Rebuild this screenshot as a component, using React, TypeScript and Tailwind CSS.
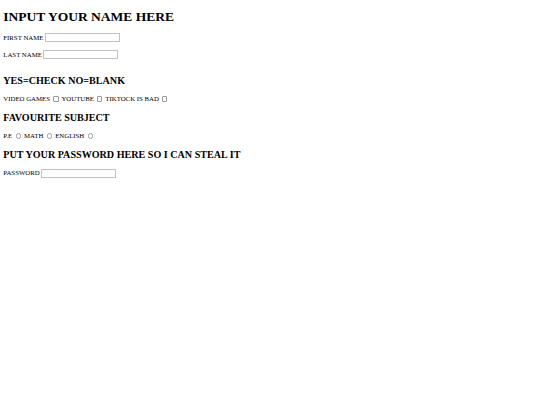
export default function App() {
  return (
    <div className="min-h-[405px] w-[540px] bg-white px-[3.3px] pt-[9px] text-black [font-family:'Liberation_Serif','Times_New_Roman',serif]">
      <h1 className="text-[13.5px] font-bold leading-[15.5px]">INPUT YOUR NAME HERE</h1>

      <div className="mt-[8.9px] text-[6.8px]">
        <div className="flex h-[9.2px] items-center">
          <span>FIRST NAME</span>
          <input type="text" className="ml-[1.6px] h-[9px] w-[75px] border border-[#c2c2c2] outline-none" />
        </div>
        <div className="h-[7.7px]" />
        <div className="flex h-[9.2px] items-center">
          <span>LAST NAME</span>
          <input type="text" className="ml-[1.6px] h-[9px] w-[75px] border border-[#c2c2c2] outline-none" />
        </div>
        <div className="h-[6.8px]" />
      </div>

      <h2 className="mt-[8.4px] text-[10.1px] font-bold leading-[11.6px]">YES=CHECK NO=BLANK</h2>
      <div className="mt-[8.4px] flex h-[8.6px] items-center text-[6.8px]">
        <span>VIDEO GAMES</span>
        <input type="checkbox" className="ml-[3.2px] mr-[2.9px] h-[5.4px] w-[5.4px] appearance-none rounded-[1px] border border-[#9a9a9a]" />
        <span>YOUTUBE</span>
        <input type="checkbox" className="ml-[3.2px] mr-[2.9px] h-[5.4px] w-[5.4px] appearance-none rounded-[1px] border border-[#9a9a9a]" />
        <span>TIKTOCK IS BAD</span>
        <input type="checkbox" className="ml-[3.2px] h-[5.4px] w-[5.4px] appearance-none rounded-[1px] border border-[#9a9a9a]" />
      </div>

      <h2 className="mt-[8.4px] text-[10.1px] font-bold leading-[11.6px]">FAVOURITE SUBJECT</h2>
      <div className="mt-[8.4px] flex h-[8.6px] items-center text-[6.8px]">
        <span>P.E</span>
        <input type="radio" name="subject" className="ml-[3.6px] mr-[2.9px] h-[5.4px] w-[5.4px] appearance-none rounded-full border border-[#9a9a9a]" />
        <span>MATH</span>
        <input type="radio" name="subject" className="ml-[3.6px] mr-[2.9px] h-[5.4px] w-[5.4px] appearance-none rounded-full border border-[#9a9a9a]" />
        <span>ENGLISH</span>
        <input type="radio" name="subject" className="ml-[3.6px] h-[5.4px] w-[5.4px] appearance-none rounded-full border border-[#9a9a9a]" />
      </div>

      <h2 className="mt-[8.4px] text-[10.1px] font-bold leading-[11.6px]">PUT YOUR PASSWORD HERE SO I CAN STEAL IT</h2>
      <div className="mt-[8.4px] flex h-[9.2px] items-center text-[6.8px]">
        <span>PASSWORD</span>
        <input type="password" className="ml-[1.6px] h-[9px] w-[75px] border border-[#c2c2c2] outline-none" />
      </div>
    </div>
  );
}
